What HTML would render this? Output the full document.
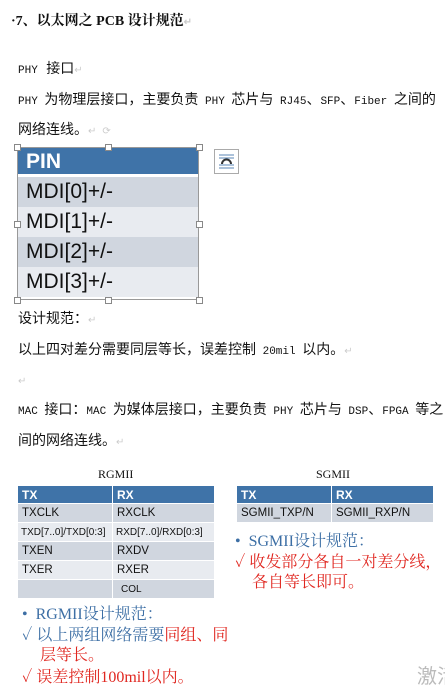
<!DOCTYPE html>
<html><head><meta charset="utf-8"><style>
body{margin:0;width:445px;height:695px;background:#fff;position:relative;overflow:hidden;font-family:"Liberation Mono","Noto Sans CJK SC",monospace;color:#111}
.a{position:absolute;white-space:nowrap}
.t{font-size:14px;line-height:16px}
.t .m{font-size:11px}
.r{color:#ccc;font-size:10px}
.pin{position:absolute;left:17px;top:147px;width:182px;font-family:"Liberation Sans",sans-serif;font-size:21px}
.pin div{height:30px;line-height:30px;padding-left:9px;box-sizing:border-box}
.h{background:#3f73a8;color:#fff;font-weight:bold;border-bottom:3px solid #fff}
.g{background:#d0d6df}.l{background:#e8ebf0}
.hd{position:absolute;width:5px;height:5px;border:1px solid #888;background:#fff}
table{position:absolute;border-collapse:collapse;font-family:"Liberation Sans",sans-serif;font-size:11.5px}
td{height:18px;padding:0 0 0 4px;border:1px solid #fff}
th{background:#3f73a8;color:#fff;text-align:left;padding:0 0 0 4px;height:17px;font-size:12px;border:1px solid #fff}
.s{font-family:"Liberation Serif","Noto Serif CJK SC",serif;font-size:16px;line-height:20px}
.bl{color:#3d6fa5}.rd{color:#e0261f}
</style></head><body>
<div class="a" style="left:11px;top:10px;font-size:14px;font-weight:bold;font-family:'Liberation Serif','Noto Serif CJK SC',serif">·7、以太网之 PCB 设计规范<span class="r">↵</span></div>
<div class="a t" style="left:18px;top:62px"><span class="m">PHY</span> 接口<span class="r">↵</span></div>
<div class="a t" style="left:18px;top:93px"><span class="m">PHY </span>为物理层接口，主要负责<span class="m"> PHY </span>芯片与<span class="m"> RJ45</span>、<span class="m">SFP</span>、<span class="m">Fiber </span>之间的</div>
<div class="a t" style="left:18px;top:123px">网络连线。<span class="r">↵ ⟳</span></div>
<div class="pin"><div class="h">PIN</div><div class="g">MDI[0]+/-</div><div class="l">MDI[1]+/-</div><div class="g">MDI[2]+/-</div><div class="l">MDI[3]+/-</div></div>
<div style="position:absolute;left:17px;top:147px;width:182px;height:153px;border:1px solid #999;box-sizing:border-box"></div>
<div class="hd" style="left:14px;top:144px"></div><div class="hd" style="left:105px;top:144px"></div><div class="hd" style="left:196px;top:144px"></div>
<div class="hd" style="left:14px;top:221px"></div><div class="hd" style="left:196px;top:221px"></div>
<div class="hd" style="left:14px;top:297px"></div><div class="hd" style="left:105px;top:297px"></div><div class="hd" style="left:196px;top:297px"></div>
<div style="position:absolute;left:214px;top:149px;width:25px;height:25px;border:1px solid #aaa;box-sizing:border-box">
<svg width="23" height="23"><g stroke="#5a86b5" stroke-width="1"><line x1="4" y1="5" x2="19" y2="5"/><line x1="4" y1="8" x2="19" y2="8"/><line x1="4" y1="15" x2="19" y2="15"/><line x1="4" y1="18" x2="19" y2="18"/></g><path d="M7 14 A4.5 4.5 0 0 1 16 14" fill="none" stroke="#333" stroke-width="2"/></svg></div>
<div class="a t" style="left:18px;top:312px">设计规范：<span class="r">↵</span></div>
<div class="a t" style="left:18px;top:343px">以上四对差分需要同层等长，误差控制<span class="m"> 20mil </span>以内。<span class="r">↵</span></div>
<div class="a t" style="left:18px;top:373px"><span class="r">↵</span></div>
<div class="a t" style="left:18px;top:403px"><span class="m">MAC </span>接口：<span class="m">MAC </span>为媒体层接口，主要负责<span class="m"> PHY </span>芯片与<span class="m"> DSP</span>、<span class="m">FPGA </span>等之</div>
<div class="a t" style="left:18px;top:434px">间的网络连线。<span class="r">↵</span></div>
<div class="a" style="left:98px;top:467px;font-family:'Liberation Serif',serif;font-size:12px">RGMII</div>
<div class="a" style="left:316px;top:467px;font-family:'Liberation Serif',serif;font-size:12px">SGMII</div>
<table style="left:17px;top:485px;width:198px">
<tr><th style="width:90px">TX</th><th>RX</th></tr>
<tr class="g"><td>TXCLK</td><td>RXCLK</td></tr>
<tr class="l"><td style="font-size:10px;padding-left:3px">TXD[7..0]/TXD[0:3]</td><td style="font-size:10px;padding-left:3px">RXD[7..0]/RXD[0:3]</td></tr>
<tr class="g"><td>TXEN</td><td>RXDV</td></tr>
<tr class="l"><td>TXER</td><td>RXER</td></tr>
<tr class="g"><td></td><td style="padding-left:8px;font-size:10px">COL</td></tr>
</table>
<table style="left:236px;top:485px;width:198px">
<tr><th style="width:90px">TX</th><th>RX</th></tr>
<tr class="g"><td>SGMII_TXP/N</td><td>SGMII_RXP/N</td></tr>
</table>
<div class="a s bl" style="left:235px;top:532px">•&nbsp; SGMII设计规范：</div>
<div class="a s rd" style="left:235px;top:553px">✓ 收发部分各自一对差分线，</div>
<div class="a s rd" style="left:252px;top:573px">各自等长即可。</div>
<div class="a s bl" style="left:22px;top:605px">•&nbsp; RGMII设计规范：</div>
<div class="a s bl" style="left:22px;top:626px">✓ 以上两组网络需要<span class="rd">同组、同</span></div>
<div class="a s rd" style="left:40px;top:646px">层等长。</div>
<div class="a s rd" style="left:22px;top:668px">✓ 误差控制100mil以内。</div>
<div class="a" style="left:417px;top:660px;font-size:20px;color:#bbb;font-family:'Noto Sans CJK SC',sans-serif">激活</div>
</body></html>
